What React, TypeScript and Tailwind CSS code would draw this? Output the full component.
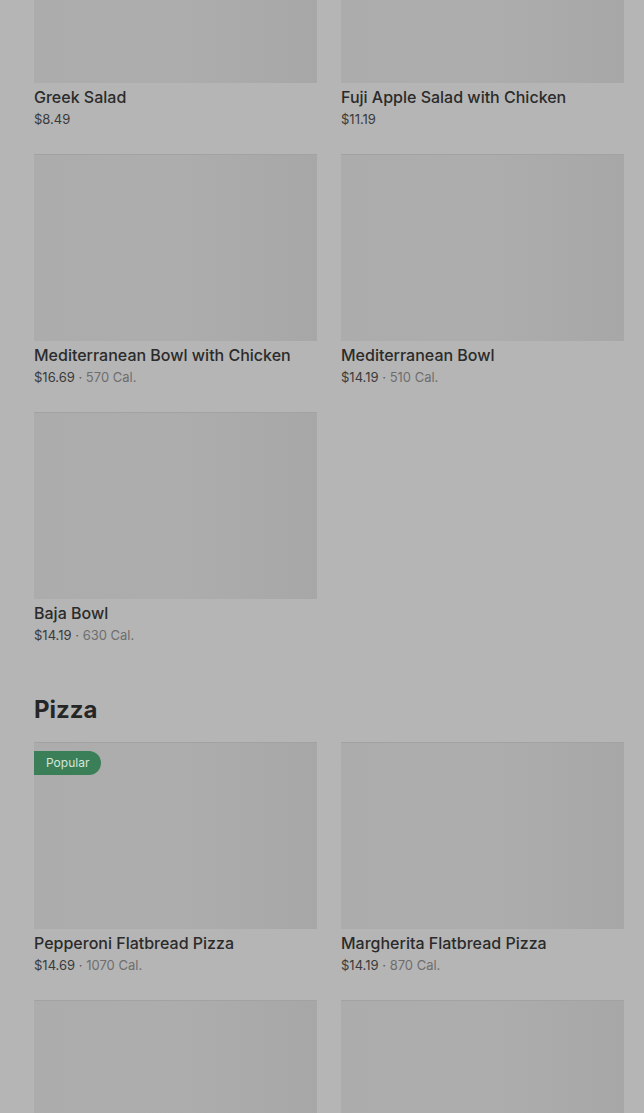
type Item = {
  name?: string;
  price?: string;
  cal?: string;
  popular?: boolean;
};

const salads: Item[] = [
  { name: "Greek Salad", price: "$8.49" },
  { name: "Fuji Apple Salad with Chicken", price: "$11.19" },
  { name: "Mediterranean Bowl with Chicken", price: "$16.69", cal: "570 Cal." },
  { name: "Mediterranean Bowl", price: "$14.19", cal: "510 Cal." },
  { name: "Baja Bowl", price: "$14.19", cal: "630 Cal." },
];

// last row sits below the fold, only the image tops are visible
const pizzas: Item[] = [
  { name: "Pepperoni Flatbread Pizza", price: "$14.69", cal: "1070 Cal.", popular: true },
  { name: "Margherita Flatbread Pizza", price: "$14.19", cal: "870 Cal." },
  {},
  {},
];

function MenuCard({ item }: { item: Item }) {
  return (
    <div className="flex flex-col">
      <div className="relative h-[187px] border-t border-[#a2a2a2] bg-gradient-to-r from-[#acacac] via-[#adadad] to-[#a7a7a7]">
        {item.popular && (
          <span className="absolute left-0 top-[8px] flex h-[24px] items-center rounded-r-full bg-[#3b7f59] pl-[12px] pr-[12px] text-[12px] text-[#d5e6da]">
            Popular
          </span>
        )}
      </div>
      {item.name && (
        <>
          <div className="mt-[3px] text-[16px] leading-[22px] font-medium text-[#2b2b2b]">
            {item.name}
          </div>
          <div className="text-[13px] leading-[22px] text-[#3a3a3a]">
            {item.price}
            {item.cal && (
              <>
                <span className="text-[#5a5a5a]"> · </span>
                <span className="text-[#6e6e6e]">{item.cal}</span>
              </>
            )}
          </div>
        </>
      )}
    </div>
  );
}

export default function App() {
  return (
    <div
      className="h-[1113px] overflow-hidden bg-[#b5b5b5]"
      style={{ fontFamily: "Inter, 'Liberation Sans', sans-serif" }}
    >
      {/* page is scrolled: first row starts above the fold */}
      <div className="-mt-[104px] pl-[34px] pr-[20px]">
        <div className="grid grid-cols-2 gap-x-[24px] gap-y-[24px]">
          {salads.map((s, i) => (
            <MenuCard key={i} item={s} />
          ))}
        </div>

        <h2 className="mt-[48px] text-[24px] leading-[32px] font-bold text-[#262626]">Pizza</h2>

        <div className="mt-[16px] grid grid-cols-2 gap-x-[24px] gap-y-[24px]">
          {pizzas.map((p, i) => (
            <MenuCard key={i} item={p} />
          ))}
        </div>
      </div>
    </div>
  );
}
